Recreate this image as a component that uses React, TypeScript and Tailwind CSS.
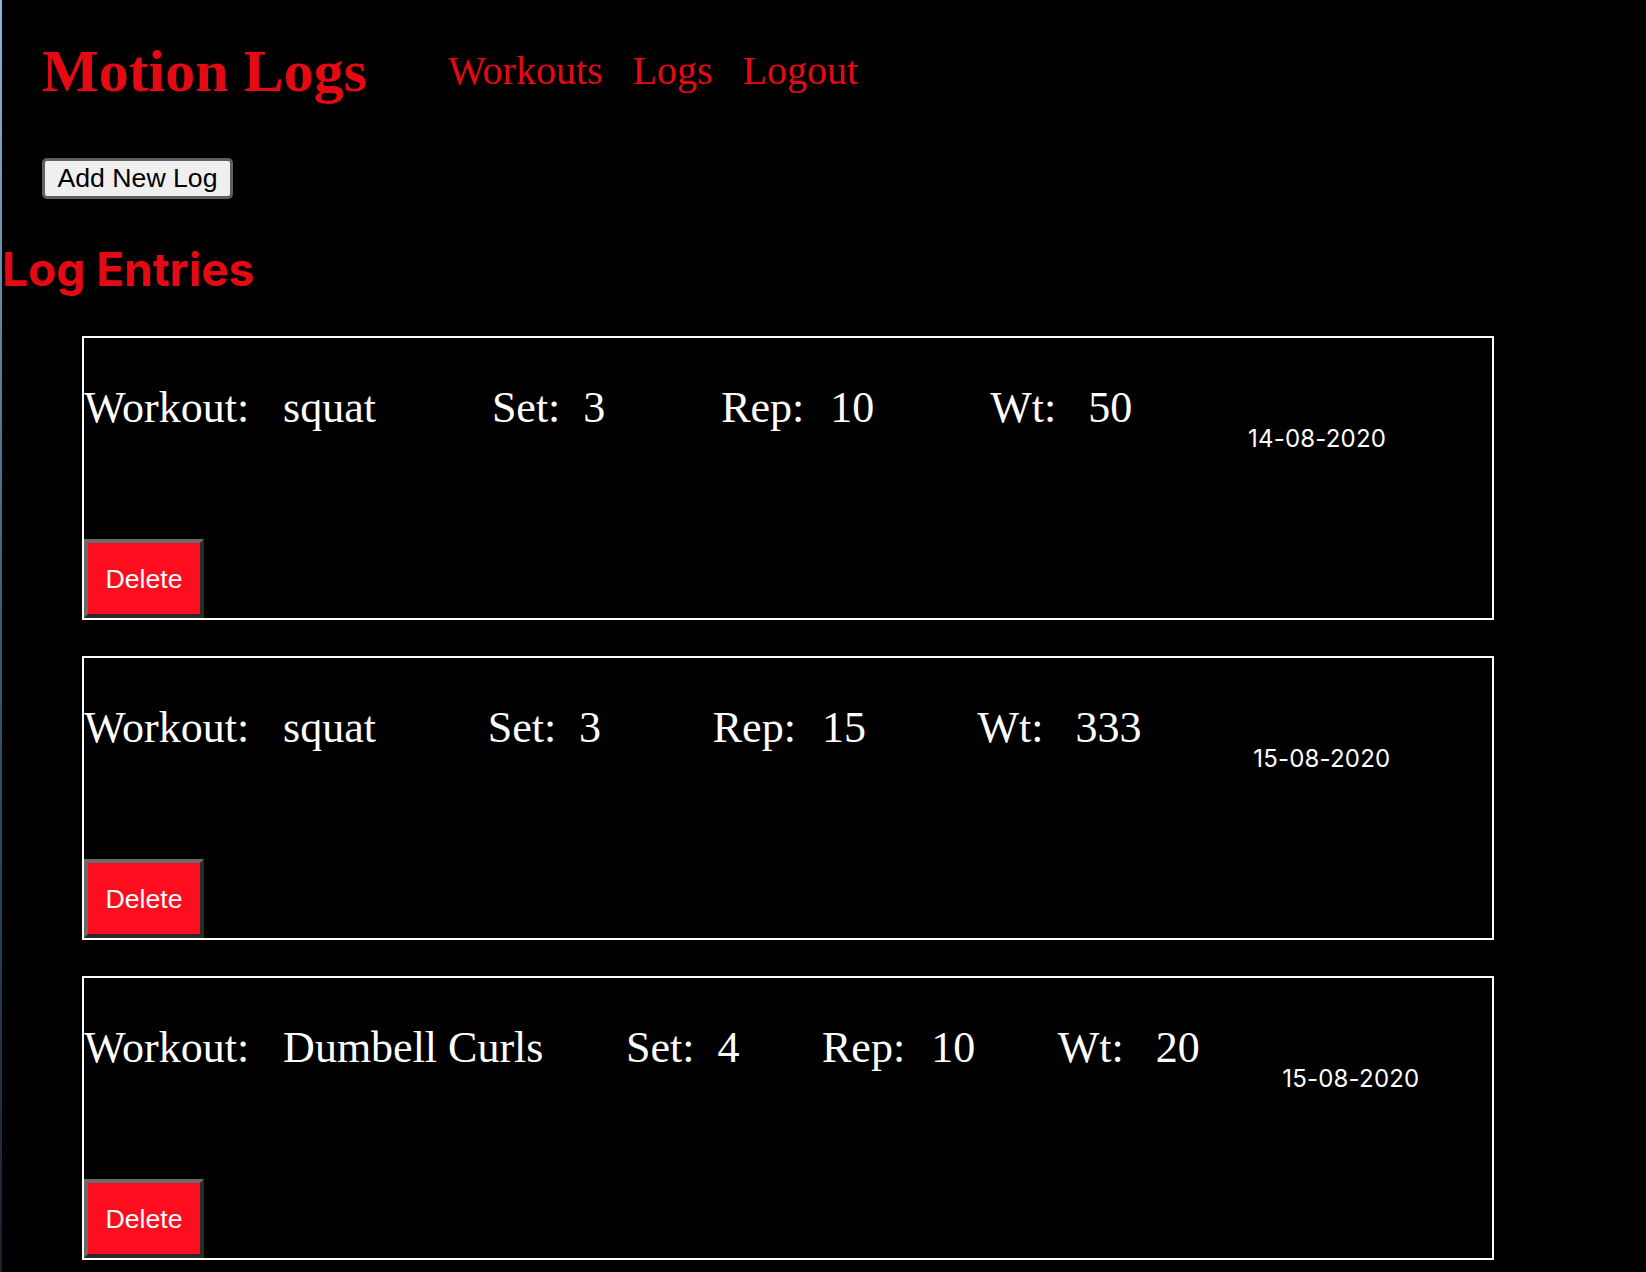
const logs = [
  { id: 1, workout: "squat", set: 3, rep: 10, wt: 50, date: "14-08-2020" },
  { id: 2, workout: "squat", set: 3, rep: 15, wt: 333, date: "15-08-2020" },
  { id: 3, workout: "Dumbell Curls", set: 4, rep: 10, wt: 20, date: "15-08-2020" },
];

const serif = "font-['Liberation_Serif',serif]";

function LogCard({ log }: { log: (typeof logs)[number] }) {
  return (
    <div className="w-[1412px] h-[284px] border-2 border-white flex flex-col">
      {/* each cell grows equally, like the original table-ish row */}
      <div className={`mt-[46px] w-[1418px] flex items-start text-white text-[44px] leading-[47px] ${serif}`}>
        <div className="flex-auto whitespace-nowrap">
          <span>Workout:</span>
          <span className="ml-[34px]">{log.workout}</span>
        </div>
        <div className="flex-auto whitespace-nowrap">
          <span>Set:</span>
          <span className="ml-[23px]">{log.set}</span>
        </div>
        <div className="flex-auto whitespace-nowrap">
          <span>Rep:</span>
          <span className="ml-[26px]">{log.rep}</span>
        </div>
        <div className="flex-auto whitespace-nowrap">
          <span>Wt:</span>
          <span className="ml-[32px]">{log.wt}</span>
        </div>
        <div className="flex-auto mt-[40px] font-['Inter',sans-serif] text-[24px] leading-[29px] tracking-[0.2px]">
          {log.date}
        </div>
      </div>
      <button
        className="mt-auto w-[120px] h-[79px] bg-[#fe0d1e] text-white text-[26.67px] font-['Liberation_Sans',Arial,sans-serif] border-[4px] border-t-[#6b6b6b] border-l-[#6b6b6b] border-b-[#2b2b2b] border-r-[#2b2b2b]"
      >
        Delete
      </button>
    </div>
  );
}

export default function App() {
  return (
    <div className="min-h-screen bg-black flex">
      <div className="w-[2px] shrink-0 bg-gradient-to-b from-[#8db5da] via-[#3b5874] to-[#17222e]" />
      <div className="flex-1 pt-[38px]">
        <header className="flex items-center pl-[40px]">
          <h1 className={`text-[60px] leading-[66px] font-bold text-[#e50914] ${serif}`}>Motion Logs</h1>
          <nav className={`ml-[81px] flex gap-[30px] text-[40px] leading-[42px] text-[#e50914] ${serif}`}>
            <a href="#">Workouts</a>
            <a href="#">Logs</a>
            <a href="#">Logout</a>
          </nav>
        </header>

        <button className="ml-[40px] mt-[54px] w-[191px] h-[41px] bg-[#efefef] border-[3px] border-[#5f5f5f] rounded-[5px] text-black text-[26.67px] leading-none font-['Liberation_Sans',Arial,sans-serif]">
          Add New Log
        </button>

        <h2 className="mt-[42px] text-[46px] leading-[56px] font-bold text-[#e50914] font-['Inter',sans-serif]">
          Log Entries
        </h2>

        <div className="ml-[80px] mt-[39px] flex flex-col gap-[36px] pb-[12px]">
          {logs.map((log) => (
            <LogCard key={log.id} log={log} />
          ))}
        </div>
      </div>
    </div>
  );
}
